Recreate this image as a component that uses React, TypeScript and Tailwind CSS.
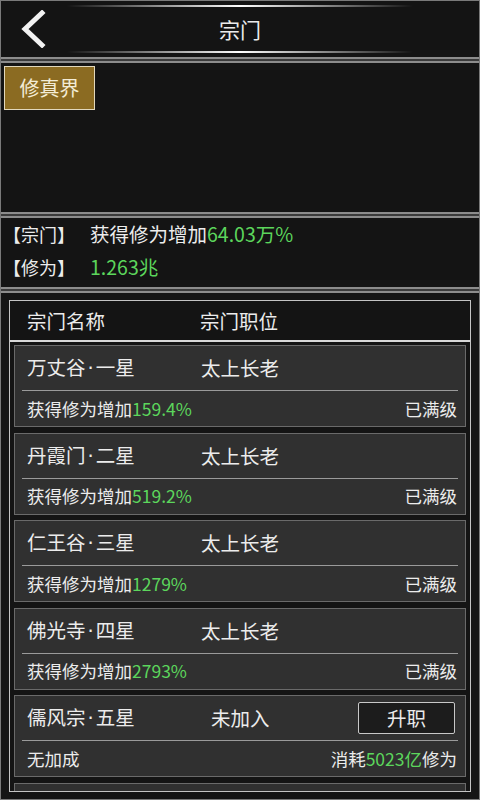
import React from 'react';

const sects = [
  { name: '万丈谷', star: '一星', rank: '太上长老', bonus: '159.4%', joined: true },
  { name: '丹霞门', star: '二星', rank: '太上长老', bonus: '519.2%', joined: true },
  { name: '仁王谷', star: '三星', rank: '太上长老', bonus: '1279%', joined: true },
  { name: '佛光寺', star: '四星', rank: '太上长老', bonus: '2793%', joined: true },
  { name: '儒风宗', star: '五星', rank: '未加入', bonus: '', joined: false },
];

function Separator() {
  return <div className="h-[6px] shrink-0 border-y-2 border-[#8c8c8c] bg-[#3a3a3a]" />;
}

function GlowLine() {
  return (
    <div className="h-[2px] bg-gradient-to-r from-transparent via-white to-transparent" />
  );
}

export default function App() {
  return (
    <div
      className="w-[480px] h-[800px] overflow-hidden bg-[#141414] text-[#ececec] flex flex-col border border-[#7a7a7a]"
      style={{ fontFamily: '"Noto Sans CJK SC", "Noto Sans", sans-serif' }}
    >
      {/* header */}
      <div className="h-[56px] shrink-0 flex">
        <div className="w-[66px] flex items-center justify-start pl-[18px]">
          <svg width="28" height="38" viewBox="0 0 28 38">
            <path d="M23 3 L6 19 L23 35" fill="none" stroke="#f2f2f2" strokeWidth="5" strokeLinecap="square" />
          </svg>
        </div>
        <div className="flex-1 mr-[66px] pt-[4px] flex flex-col">
          <GlowLine />
          <div className="h-[44px] flex items-center justify-center text-[21px] leading-none">宗门</div>
          <GlowLine />
        </div>
      </div>
      <Separator />

      {/* realm tab area */}
      <div className="h-[149px] shrink-0 pt-[3px] pl-[3px]">
        <button className="w-[91px] h-[44px] bg-[#8b6b22] border border-[#e2d8bc] text-[#f3ecd6] text-[20px] leading-none flex items-center justify-center">
          修真界
        </button>
      </div>
      <Separator />

      {/* summary */}
      <div className="h-[69px] shrink-0 text-[19.5px] leading-none">
        <div className="h-[32px] flex items-center">
          <span className="w-[89px] pl-[2px] text-[18px]">【宗门】</span>
          <span>获得修为增加</span>
          <span className="text-[#5cd65c]">64.03万%</span>
        </div>
        <div className="h-[33px] flex items-center">
          <span className="w-[89px] pl-[2px] text-[18px]">【修为】</span>
          <span className="text-[#5cd65c]">1.263兆</span>
        </div>
      </div>
      <Separator />

      {/* sect list */}
      <div className="flex-1 min-h-0 px-[8px] pt-[7px] pb-[7px] flex">
        <div className="flex-1 border border-[#c4c4c4] flex flex-col overflow-hidden">
          <div className="h-[41px] shrink-0 flex items-center text-[19.5px] leading-none border-b-2 border-[#d8d8d8]">
            <span className="w-[190px] pl-[17px]">宗门名称</span>
            <span>宗门职位</span>
          </div>
          <div className="flex flex-col gap-[5.5px] px-[4px] pt-[3px]">
            {sects.map((s) => (
              <div key={s.name} className="h-[82px] shrink-0 bg-[#303030] border border-[#6a6a6a] flex flex-col leading-none">
                <div className="h-[44px] flex items-center pl-[12px] pr-[10px] text-[19.5px]">
                  <span className="w-[174px]">
                    {s.name}
                    <span className="mx-[2px]" style={{ fontFamily: '"DejaVu Sans", sans-serif' }}>·</span>
                    {s.star}
                  </span>
                  <span className={s.joined ? '' : 'pl-[10px]'}>{s.rank}</span>
                  {!s.joined && (
                    <button className="ml-auto w-[97px] h-[32px] bg-[#1c1c1c] border border-[#c8c8c8] rounded-[2px] text-[19.5px] leading-none flex items-center justify-center">
                      升职
                    </button>
                  )}
                </div>
                <div className="mx-[7px] h-[1px] bg-[#9a9a9a]" />
                <div className="h-[35px] flex items-center justify-between pl-[12px] pr-[8px] text-[17.5px]">
                  {s.joined ? (
                    <>
                      <span>
                        获得修为增加<span className="text-[#5cd65c]">{s.bonus}</span>
                      </span>
                      <span>已满级</span>
                    </>
                  ) : (
                    <>
                      <span>无加成</span>
                      <span>
                        消耗<span className="text-[#5cd65c]">5023亿</span>修为
                      </span>
                    </>
                  )}
                </div>
              </div>
            ))}
            {/* next card, scrolled out of view */}
            <div className="h-[82px] shrink-0 bg-[#303030] border border-[#6a6a6a]" />
          </div>
        </div>
      </div>
    </div>
  );
}
